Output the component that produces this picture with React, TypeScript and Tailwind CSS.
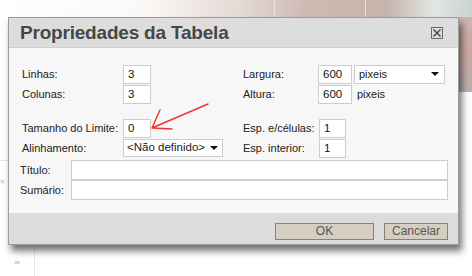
import React from "react";

const font = { fontFamily: '"Liberation Sans", Arial, sans-serif' };

const Field = ({ value, w }: { value: string; w: string }) => (
  <div className={`${w} h-[19px] border border-[#c9ccd0] bg-white pl-[4px] text-[11.5px] leading-[17px] text-[#111]`}>
    {value}
  </div>
);

const Caret = () => (
  <svg width="8" height="5" viewBox="0 0 8 5" className="shrink-0">
    <path d="M0 0 L8 0 L4 4 Z" fill="#111" />
  </svg>
);

export default function App() {
  return (
    <div className="relative w-[472px] h-[276px] overflow-hidden bg-white" style={font}>
      {/* blurred page behind */}
      <div className="absolute left-0 top-0 w-[472px] h-[20px] bg-[linear-gradient(to_right,#ffffff_0%,#fbf9f8_30%,#e6dbd6_50%,#cdbbb3_65%,#c7b5ad_82%,#e4e7e3_92%,#c9d2cf_100%)]" />
      <div className="absolute left-[274px] top-0 w-px h-[17px] bg-[#e9e4e1]" />
      <div className="absolute left-[365px] top-0 w-px h-[17px] bg-[#e6dfdb]" />
      <div className="absolute right-0 top-[17px] w-[14px] h-[75px] bg-[linear-gradient(to_bottom,#c9b7b1,#cfa9a5_40%,#b9b0ad)]" />
      <div className="absolute left-0 top-[160px] w-[8px] h-px bg-[#e4e4e4]" />
      <div className="absolute left-0 top-[178px] text-[7px] leading-none text-[#9aa]">≡</div>
      <div className="absolute left-[34px] top-[250px] w-px h-[26px] bg-[#e6e6e6]" />
      <div className="absolute left-[14px] top-[259px] text-[8px] leading-none tracking-[-1px] text-[#9fbcb4]">›››</div>

      {/* dialog */}
      <div className="absolute left-[8px] top-[17px] w-[451px] h-[228px] flex flex-col border border-[#9c9c9c] bg-[#f7f7f7] shadow-[3px_6px_7px_rgba(0,0,0,0.55)]">
        <div className="h-[30px] flex items-center justify-between bg-[#dddddd] border-b border-[#d2ccc6] pl-[11px] pr-[15px]">
          <span className="text-[19px] font-bold text-[#474747] leading-none tracking-[-0.2px]">Propriedades da Tabela</span>
          <svg width="12" height="12" viewBox="0 0 12 12">
            <rect x="0.5" y="0.5" width="11" height="11" fill="none" stroke="#666" />
            <path d="M2.5 2.5 L9.5 9.5 M9.5 2.5 L2.5 9.5" stroke="#444" strokeWidth="1.4" />
          </svg>
        </div>

        <div className="flex-1 flex flex-col pt-[16px] text-[11px] text-[#222] whitespace-nowrap">
          <div className="flex pl-[13px]">
            <div className="w-[221px] flex flex-col">
              <div className="flex items-center h-[20px]">
                <span className="w-[101px]">Linhas:</span>
                <Field value="3" w="w-[28px]" />
              </div>
              <div className="flex items-center h-[20px]">
                <span className="w-[101px]">Colunas:</span>
                <Field value="3" w="w-[28px]" />
              </div>
              <div className="flex items-center h-[20px] mt-[14px]">
                <span className="w-[101px]">Tamanho do Limite:</span>
                <Field value="0" w="w-[28px]" />
              </div>
              <div className="flex items-center h-[20px]">
                <span className="w-[101px]">Alinhamento:</span>
                <div className="w-[100px] h-[18px] flex items-center justify-between border border-[#c9ccd0] bg-white pl-[3px] pr-[4px] text-[11.5px]">
                  <span>&lt;Não definido&gt;</span>
                  <Caret />
                </div>
              </div>
            </div>
            <div className="flex flex-col">
              <div className="flex items-center h-[20px]">
                <span className="w-[75px]">Largura:</span>
                <Field value="600" w="w-[34px]" />
                <div className="ml-[2px] w-[91px] h-[19px] flex items-center justify-between border border-[#c9ccd0] bg-white pl-[4px] pr-[5px]">
                  <span>pixeis</span>
                  <Caret />
                </div>
              </div>
              <div className="flex items-center h-[20px]">
                <span className="w-[75px]">Altura:</span>
                <Field value="600" w="w-[34px]" />
                <span className="ml-[5px]">pixeis</span>
              </div>
              <div className="flex items-center h-[20px] mt-[14px]">
                <span className="w-[76px]">Esp. e/células:</span>
                <Field value="1" w="w-[27px]" />
              </div>
              <div className="flex items-center h-[20px]">
                <span className="w-[76px]">Esp. interior:</span>
                <Field value="1" w="w-[27px]" />
              </div>
            </div>
          </div>

          <div className="flex flex-col pl-[11px] mt-[2px]">
            <div className="flex items-center h-[20px]">
              <span className="w-[51px]">Título:</span>
              <div className="w-[377px] h-[20px] border border-[#c9ccd0] bg-white" />
            </div>
            <div className="flex items-center h-[20px]">
              <span className="w-[51px]">Sumário:</span>
              <div className="w-[377px] h-[20px] border border-[#c9ccd0] bg-white" />
            </div>
          </div>
        </div>

        <div className="h-[31px] flex justify-end items-start gap-[10px] bg-[#dcdcdc] border-t border-[#e3d9d0] pt-[9px] pr-[10px]">
          <button className="w-[99px] h-[17px] border border-[#8c826f] bg-[#d5cfc3] text-[12px] leading-[15px] text-[#555]">OK</button>
          <button className="w-[64px] h-[17px] border border-[#8c826f] bg-[#d5cfc3] text-[12px] leading-[15px] text-[#555]">Cancelar</button>
        </div>
      </div>

      {/* red arrow annotation */}
      <svg className="absolute left-0 top-0" width="472" height="276" viewBox="0 0 472 276">
        <path d="M208 104 L152 128 M152 128 L160 110 M152 128 L172 129" stroke="#f03434" strokeWidth="1.4" fill="none" strokeLinecap="round" />
      </svg>
    </div>
  );
}
